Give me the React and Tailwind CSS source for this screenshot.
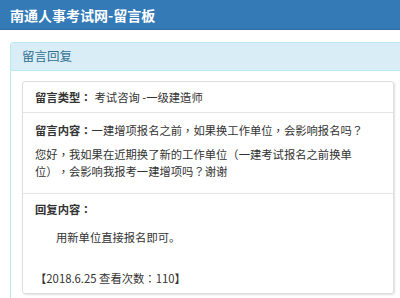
const PUNCT = "，：？（）";

function T({ text }) {
  return (
    <>
      {Array.from(text).map((c, i) =>
        PUNCT.includes(c) ? (
          <span key={i} style={{ fontFamily: '"Noto Sans CJK TC", sans-serif' }}>{c}</span>
        ) : (
          <span key={i}>{c}</span>
        )
      )}
    </>
  );
}

export default function App() {
  const font = { fontFamily: '"Noto Sans CJK SC", "Noto Sans", sans-serif' };
  return (
    <div className="w-[400px] h-[298px] overflow-hidden bg-white text-[#333] [text-spacing-trim:space-all]" style={font}>
      <div className="h-[30px] bg-[#337ab7] border-b border-[#2e6da4] pl-[10px] flex items-center text-white font-bold text-[14px] leading-none">
        南通人事考试网-留言板
      </div>
      <div className="pt-[12px] pl-[10px]">
        <div className="w-[420px] border border-[#bce8f1] rounded-[3px] h-[300px]">
          <div className="h-[28px] bg-[#d9edf7] border-b border-[#bce8f1] pl-[11px] flex items-center text-[#31708f] text-[12.5px]">
            留言回复
          </div>
          <div className="pt-[10px] pl-[11px]">
            <div className="w-[372px] border border-[#dddddd] rounded-[3px] shadow-[1px_1px_2px_rgba(0,0,0,0.12)] text-[11.3px]">
              <div className="h-[31px] px-[12px] flex items-center border-b border-[#e5e5e5]">
                <span className="font-bold"><T text="留言类型：" /></span>
                <span className="ml-[3px]">考试咨询 -一级建造师</span>
              </div>
              <div className="px-[12px] pt-[8px] pb-[13px] border-b border-[#e5e5e5]">
                <div className="leading-[18px]">
                  <span className="font-bold"><T text="留言内容：" /></span>
                  <T text="一建增项报名之前，如果换工作单位，会影响报名吗？" />
                </div>
                <div className="leading-[17px] mt-[7px]">
                  <T text="您好，我如果在近期换了新的工作单位（一建考试报名之前换单" />
                  <br />
                  <T text="位），会影响我报考一建增项吗？谢谢" />
                </div>
              </div>
              <div className="px-[12px] pt-[6px] pb-[6px]">
                <div className="leading-[18px] font-bold"><T text="回复内容：" /></div>
                <div className="leading-[18px] mt-[10px] pl-[21px]">用新单位直接报名即可。</div>
                <div className="leading-[18px] mt-[23px]">
                  <T text="【2018.6.25 查看次数：110】" />
                </div>
              </div>
            </div>
          </div>
        </div>
      </div>
    </div>
  );
}
